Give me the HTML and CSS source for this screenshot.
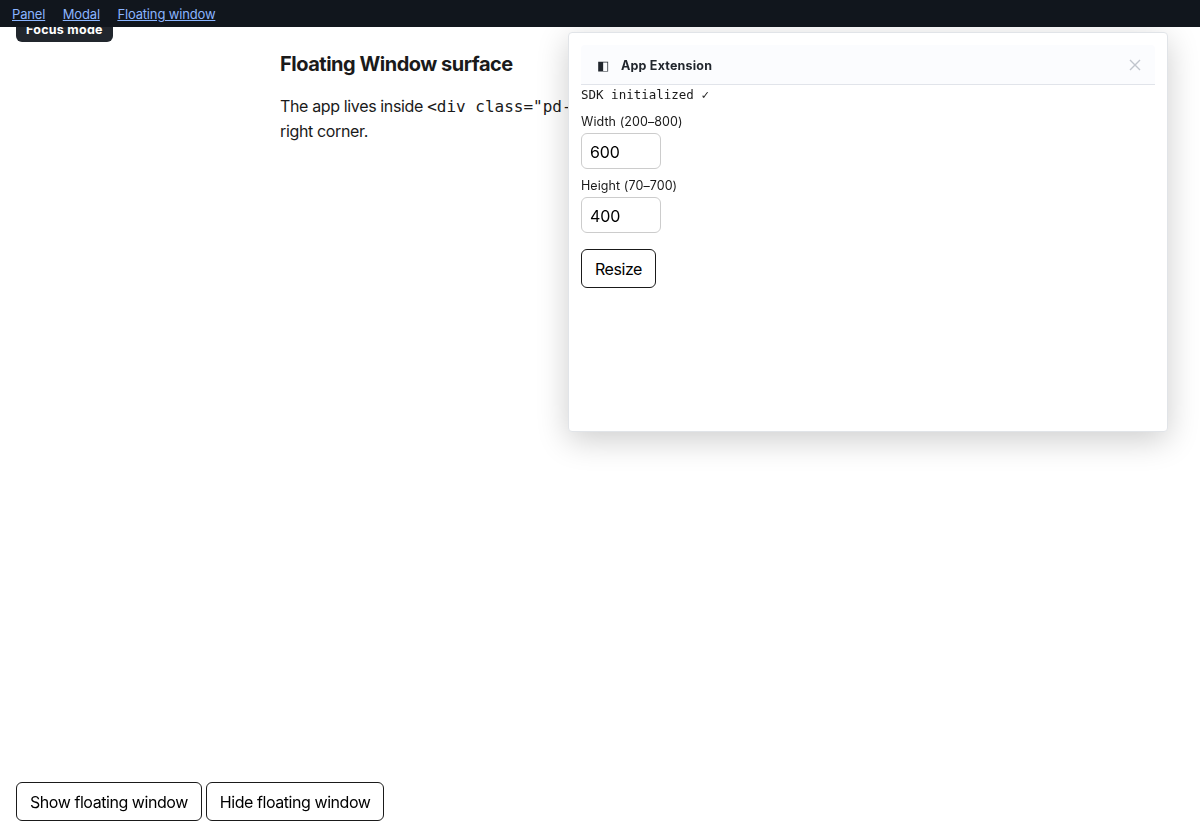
FILE: index.html
```
<!doctype html>
<html lang="en">
  <head>
    <meta charset="utf-8" />
    <title>Floating window</title>
    <link rel="stylesheet" href="styles.css">
  </head>
  <body>
    <nav class="surfaces">
      <a href="#panel">Panel</a>
      <a href="#modal">Modal</a>
      <a href="#floating">Floating window</a>
    </nav>
    <div class="focus-mode">Focus mode</div>

    <main>
      <h1>Floating Window surface</h1>
      <p>
        The app lives inside <code>&lt;div class="pd-</code><br />
        right corner.
      </p>
    </main>

    <div class="pd-floating">
      <header class="pd-header">
        <span class="pd-icon">◧</span>
        <span class="pd-title">App Extension</span>
        <button class="pd-close" aria-label="Close">
          <svg width="12" height="12" viewBox="0 0 12 12">
            <path d="M1 1l10 10M11 1L1 11" />
          </svg>
        </button>
      </header>
      <div class="status">SDK initialized ✓</div>
      <label class="field">
        Width (200–800)
        <input type="text" value="600" />
      </label>
      <label class="field">
        Height (70–700)
        <input type="text" value="400" />
      </label>
      <button class="btn resize">Resize</button>
    </div>

    <div class="controls">
      <button class="btn">Show floating window</button>
      <button class="btn">Hide floating window</button>
    </div>
  </body>
</html>
```
FILE: styles.css
```
* {
  box-sizing: border-box;
}
body {
  margin: 0;
  height: 837px;
  overflow: hidden;
  font-family: Inter, sans-serif;
  font-size: 16px;
  line-height: 25px;
  color: #1a1a1a;
  background: #fff;
}
.surfaces {
  position: fixed;
  top: 0;
  left: 0;
  right: 0;
  z-index: 20;
  display: flex;
  gap: 17.5px;
  height: 27px;
  padding: 4px 12px;
  background: #11161d;
  font-size: 13px;
  line-height: 20px;
  letter-spacing: -0.16px;
}
.surfaces a {
  color: #8ab4ff;
}
.focus-mode {
  position: fixed;
  top: 16px;
  left: 16px;
  padding: 5px 10px 3px;
  border-radius: 6px;
  background: #21262d;
  color: #fff;
  font-size: 12.5px;
  font-weight: 700;
  line-height: 18px;
  letter-spacing: 0.26px;
}
main {
  max-width: 640px;
  margin: 0 auto;
  padding-top: 48px;
}
h1 {
  margin: 0 0 14px;
  font-size: 20px;
  font-weight: 700;
  line-height: 32px;
  letter-spacing: -0.48px;
}
p {
  margin: 0;
  letter-spacing: -0.36px;
}
code {
  font-family: "DejaVu Sans Mono", monospace;
  font-size: 16px;
  letter-spacing: 0;
}
.pd-floating {
  position: fixed;
  top: 32px;
  right: 32px;
  z-index: 10;
  width: 600px;
  height: 400px;
  padding: 12px;
  border: 1px solid #e1e4e8;
  border-radius: 4px;
  background: #fff;
  box-shadow: 0 8px 32px rgba(0, 0, 0, 0.2);
}
.pd-header {
  display: flex;
  align-items: center;
  height: 40px;
  padding: 0 14px 0 16px;
  border-bottom: 1px solid #e1e4ea;
  border-radius: 4px 4px 0 0;
  background: #fbfcfe;
  color: #21262d;
  font-size: 13px;
}
.pd-icon {
  width: 12px;
  margin-right: 12px;
  padding-top: 1px;
  font-size: 13px;
}
.pd-title {
  padding-top: 2px;
  overflow: hidden;
  font-size: 12.5px;
  font-weight: 650;
  line-height: 12px;
  letter-spacing: 0.2px;
}
.pd-close {
  display: flex;
  margin-left: auto;
  padding: 0;
  border: none;
  background: none;
}
.pd-close svg {
  fill: none;
  stroke: #c0c5cd;
  stroke-width: 1.4;
}
.status {
  font-family: "DejaVu Sans Mono", monospace;
  font-size: 12.5px;
  line-height: 19px;
}
.field {
  display: block;
  margin-top: 8px;
  font-size: 12.5px;
  line-height: 20px;
  letter-spacing: 0.08px;
}
.field + .field {
  margin-top: 7px;
}
.field input {
  display: block;
  width: 80px;
  height: 36px;
  margin-top: 1px;
  padding: 1px 8px 0;
  border: 1px solid #ccc;
  border-radius: 6px;
  background: #fff;
  color: #000;
  font: 16px Inter, sans-serif;
  letter-spacing: -0.1px;
}
.btn {
  height: 39px;
  padding: 0 13px;
  border: 1px solid #1a1a1a;
  border-radius: 6px;
  background: #fff;
  color: #000;
  font: 16px Inter, sans-serif;
  letter-spacing: -0.44px;
}
.resize {
  margin-top: 16px;
}
.controls {
  position: fixed;
  bottom: 16px;
  left: 16px;
  display: flex;
  gap: 4px;
}
```
